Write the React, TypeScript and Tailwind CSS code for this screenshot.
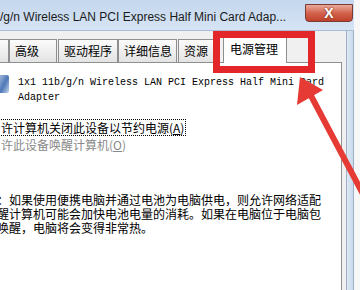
import React from 'react'

const cjk = { fontFamily: '"Noto Sans CJK SC", "Liberation Sans", sans-serif' }

export default function App() {
    const tabs = [
        { label: '', w: 'w-[9px]', ml: 'ml-0' },
        { label: '高级', w: 'w-[48px]', ml: 'ml-0' },
        { label: '驱动程序', w: 'w-[60px]', ml: 'ml-[1px]' },
        { label: '详细信息', w: 'w-[59px]', ml: 'ml-0' },
        { label: '资源', w: 'w-[36px]', ml: 'ml-[1px]' },
    ]

    return (
        <div className="relative w-[360px] h-[290px] overflow-hidden bg-white" style={cjk}>
            <div className="flex h-full">
                {/* window */}
                <div className="w-[354px] flex flex-col">
                    {/* title bar */}
                    <div className="h-[31px] flex items-center bg-gradient-to-b from-[#c4d7ee] to-[#d6e4f4] border-b border-[#a9bcd4]">
                        <span
                            className="text-[12px] text-[#1b1b1b] whitespace-nowrap pt-[3px]"
                            style={{ fontFamily: '"Liberation Sans", Arial, sans-serif' }}
                        >
                            /g/n Wireless LAN PCI Express Half Mini Card Adap...
                        </span>
                    </div>
                    <div className="flex flex-1">
                        {/* dialog client */}
                        <div className="w-[346px] bg-[#f0f0f0] flex flex-col pt-[2px]">
                            <div className="flex items-end h-[29px]">
                                {tabs.map((t, i) => (
                                    <div
                                        key={i}
                                        className={`${t.w} ${t.ml} h-[23px] flex items-center pl-[5px] text-[12px] text-black bg-gradient-to-b from-[#fbfbfb] to-[#e3e3e3] border border-b-0 border-[#8e8f8f] ${i === 0 ? 'border-l-0' : ''}`}
                                    >
                                        {t.label}
                                    </div>
                                ))}
                                <div className="ml-[9px] w-[64px] h-[28px] -mb-px relative z-10 flex items-center pl-[6px] pb-[2px] text-[12px] text-black bg-white border border-b-0 border-[#8e8f8f]">
                                    电源管理
                                </div>
                            </div>
                            {/* content panel */}
                            <div className="flex-1 w-[342px] bg-white border-t border-r border-[#8e8f8f]">
                                <div className="flex pt-[12px]">
                                    <div className="w-[9px] h-[18px] bg-gradient-to-br from-[#9fb7d8] via-[#4f78b8] to-[#c8d6ea] rounded-r-[2px]" />
                                    <div
                                        className="ml-[9px] text-[10px] leading-[15px] text-black whitespace-nowrap"
                                        style={{ fontFamily: '"Liberation Mono", "Courier New", monospace' }}
                                    >
                                        <div>1x1 11b/g/n Wireless LAN PCI Express Half Mini Card</div>
                                        <div>Adapter</div>
                                    </div>
                                </div>
                                <div className="mt-[14px] ml-[1px] text-[12px] leading-[17px] whitespace-nowrap">
                                    <div className="inline-block border border-dotted border-black border-l-0 pr-[1px] text-black leading-[15px]">
                                        许计算机关闭此设备以节约电源(<span className="underline">A</span>)
                                    </div>
                                    <div className="text-[#8a8a8a]">
                                        许此设备唤醒计算机(<span className="underline">O</span>)
                                    </div>
                                </div>
                                <div className="mt-[40px] ml-[-3px] text-[12px] leading-[14px] text-black whitespace-nowrap">
                                    <div>：如果使用便携电脑并通过电池为电脑供电，则允许网络适配</div>
                                    <div>醒计算机可能会加快电池电量的消耗。如果在电脑位于电脑包</div>
                                    <div>唤醒，电脑将会变得非常热。</div>
                                </div>
                            </div>
                        </div>
                        {/* right window frame */}
                        <div className="flex-1 bg-gradient-to-r from-[#dce7f4] to-[#c9daee] border-l border-r border-[#9fb0c6]" />
                    </div>
                </div>
                <div className="flex-1 bg-[#f7f7f7]" />
            </div>

            {/* close button */}
            <div className="absolute left-[305px] top-[4px] w-[48px] h-[18px] rounded-b-[4px] border border-[#7a3b33] bg-gradient-to-b from-[#e9a99b] via-[#d2634d] to-[#c0402a] flex items-center justify-center">
                <span className="text-white text-[14px] font-bold leading-none" style={{ fontFamily: '"Liberation Sans", Arial, sans-serif', textShadow: '0 0 2px #5a1a10' }}>
                    X
                </span>
            </div>

            {/* red highlight box */}
            <div className="absolute left-[213px] top-[31px] w-[102px] h-[42px] border-[7px] border-[#e3262a] z-20" />

            {/* red arrow */}
            <svg className="absolute left-0 top-0 z-20" width="360" height="290" viewBox="0 0 360 290">
                <line x1="309" y1="92" x2="364" y2="196" stroke="#e63a35" strokeWidth="6" strokeLinecap="round" />
                <polygon points="300,77 297,105 323,90" fill="#e63a35" />
            </svg>
        </div>
    )
}
